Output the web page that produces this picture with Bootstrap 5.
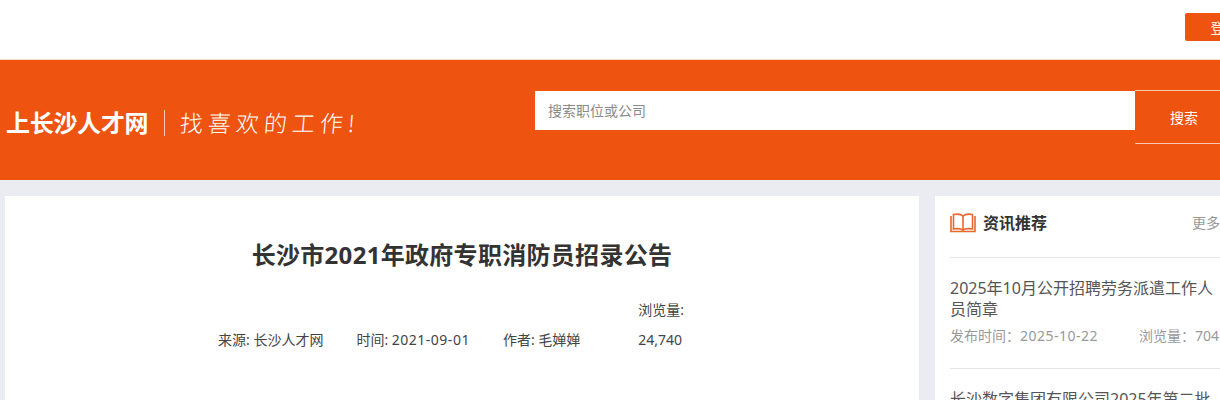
<!DOCTYPE html>
<html lang="zh-CN">
<head>
  <meta charset="UTF-8">
  <title>长沙市2021年政府专职消防员招录公告</title>
  <link href="https://cdn.jsdelivr.net/npm/bootstrap@5.3.3/dist/css/bootstrap.min.css" rel="stylesheet">
  <style>
    html, body { overflow: hidden; }
    body {
      width: 1220px;
      background: #ebebf2;
      color: #333;
      font-family: "Noto Sans", "Noto Sans CJK SC", sans-serif;
      font-size: 14px;
    }
    .page-wrap { width: 1240px; }
    .num-text { letter-spacing: .5px; }
    .top-bar {
      height: 60px;
      background: #fff;
      border-bottom: 1px solid #f3d9cc;
      padding: 13px 0 0 1185px;
    }
    .login-btn {
      width: 79px;
      height: 28px;
      padding: 0;
      background: #ee5310;
      border: 0;
      border-radius: 2px;
      color: #fff;
      font-size: 14px;
    }
    .brand-bar {
      height: 120px;
      background: #ee5310;
      color: #fff;
      padding: 30px 0 0 6px;
    }
    .brand-name {
      width: 159px;
      height: 26px;
      margin-top: 20px;
      border-right: 1px solid #f9c9b0;
      font-size: 24px;
      font-weight: 700;
      line-height: 26px;
      letter-spacing: -.3px;
    }
    .brand-slogan {
      width: 370px;
      margin-top: 19px;
      padding-left: 15px;
      font-family: "Noto Sans CJK SC", sans-serif;
      font-size: 23px;
      font-weight: 300;
      line-height: 26px;
      letter-spacing: 5px;
    }
    .brand-slogan span { display: inline-block; transform: skewX(-5deg); }
    .search-input {
      width: 600px;
      height: 39px;
      margin-top: 1px;
      padding: 0 13px;
      border: 0;
      border-radius: 0;
      font-size: 14px;
      color: #555;
    }
    .search-input::placeholder { color: #8a8a8a; opacity: 1; }
    .search-btn {
      width: 98px;
      height: 54px;
      padding: 0;
      background: transparent;
      border: solid #f9c9b0;
      border-width: 1px 0;
      border-radius: 0;
      color: #fff;
      font-size: 14px;
    }
    .body-row { padding: 16px 0 0 5px; gap: 16px; }
    .article-box {
      width: 914px;
      height: 300px;
      background: #fff;
      padding-top: 42px;
    }
    .article-title {
      margin: 0;
      font-size: 24px;
      font-weight: 700;
      line-height: 34px;
      letter-spacing: .3px;
      color: #333;
      text-align: center;
    }
    .article-meta {
      margin-top: 23px;
      padding-left: 213px;
      gap: 33px;
      line-height: 30px;
      color: #444;
    }
    .views-cell { width: 46px; margin-left: 25px; }
    .side-box {
      width: 300px;
      height: 300px;
      background: #fff;
      padding: 0 15px;
    }
    .side-head {
      height: 62px;
      border-bottom: 1px solid #e6e6e6;
      padding-bottom: 8px;
    }
    .side-head svg { margin-right: 7px; }
    .side-head strong { font-size: 16px; color: #333; }
    .side-more { margin-left: 145px; font-size: 14px; color: #999; white-space: nowrap; }
    .news-item {
      padding: 20px 0 22px;
      border-bottom: 1px solid #e6e6e6;
    }
    .news-title {
      width: 270px;
      font-size: 16px;
      line-height: 21px;
      color: #555;
    }
    .news-info {
      margin-top: 5px;
      font-size: 14px;
      line-height: 21px;
      color: #999;
      white-space: nowrap;
    }
    .news-info span + span { margin-left: 41px; }
  </style>
</head>
<body>
  <div class="page-wrap">
    <div class="top-bar">
      <button type="button" class="btn login-btn">登录</button>
    </div>
    <div class="brand-bar d-flex">
      <div class="brand-name text-nowrap">上长沙人才网</div>
      <div class="brand-slogan text-nowrap"><span>找喜欢的工作!</span></div>
      <input type="text" class="form-control search-input" placeholder="搜索职位或公司">
      <button type="button" class="btn search-btn">搜索</button>
    </div>
    <div class="body-row d-flex align-items-start">
      <div class="article-box">
        <h1 class="article-title">长沙市2021年政府专职消防员招录公告</h1>
        <div class="article-meta d-flex align-items-end">
          <div class="text-nowrap">来源: 长沙人才网</div>
          <div class="text-nowrap">时间: <span class="num-text">2021-09-01</span></div>
          <div class="text-nowrap">作者: 毛婵婵</div>
          <div class="views-cell">浏览量: 24,740</div>
        </div>
      </div>
      <div class="side-box">
        <div class="side-head d-flex align-items-center">
          <svg width="26" height="20" viewBox="0 0 26 20" fill="none" stroke="#e8682e" stroke-width="1.6">
            <path d="M1 3v15.500h24V3"/>
            <path d="M3.500 16V1.500c3.500-.6 7.500-.4 9.500 1.500 2-1.900 6-2.100 9.500-1.500V16c-3.500-.6-7.500-.4-9.500 1-2-1.400-6-1.600-9.500-1z"/>
            <path d="M13 3v14"/>
          </svg>
          <strong>资讯推荐</strong>
          <span class="side-more">更多</span>
        </div>
        <div class="news-item">
          <div class="news-title">2025年10月公开招聘劳务派遣工作人员简章</div>
          <div class="news-info"><span>发布时间：<span class="num-text">2025-10-22</span></span><span>浏览量：704</span></div>
        </div>
        <div class="news-item">
          <div class="news-title">长沙数字集团有限公司2025年第二批</div>
        </div>
      </div>
    </div>
  </div>
  <script src="https://cdn.jsdelivr.net/npm/bootstrap@5.3.3/dist/js/bootstrap.bundle.min.js"></script>
</body>
</html>
